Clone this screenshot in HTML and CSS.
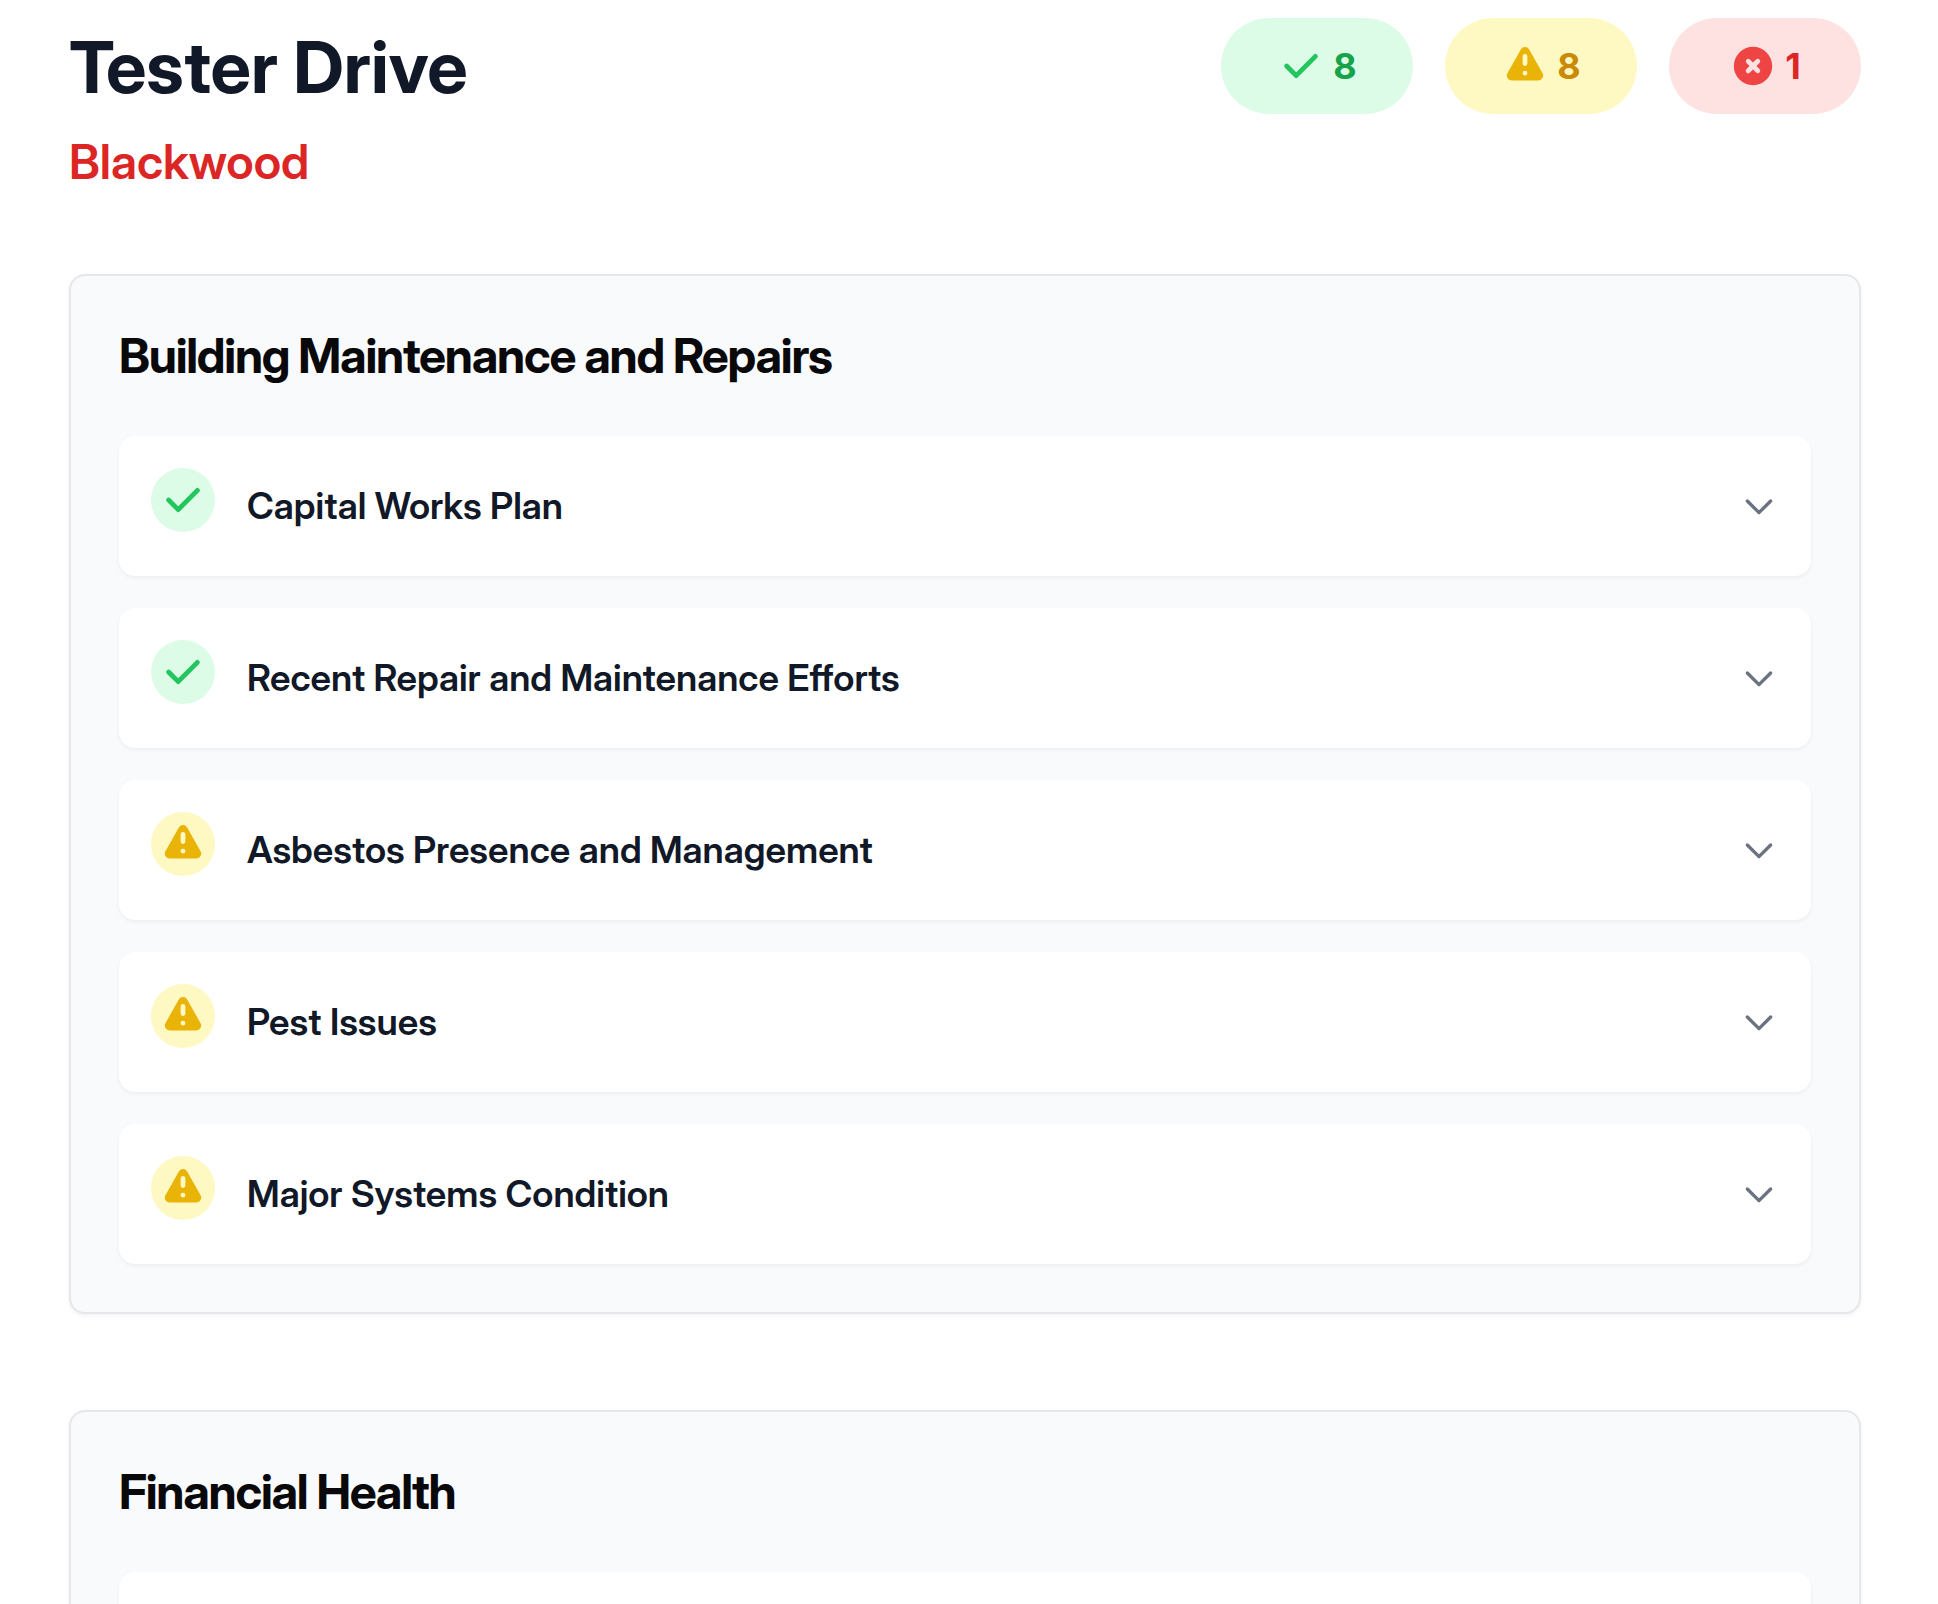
FILE: index.html
```html
<!DOCTYPE html>
<html lang="en">
<head>
<meta charset="utf-8">
<meta name="viewport" content="width=device-width, initial-scale=1">
<title>Tester Drive</title>
<link rel="stylesheet" href="styles.css">
</head>
<body>
<svg class="sprite" aria-hidden="true">
  <symbol id="check" viewBox="0 0 20 20"><path fill-rule="evenodd" d="M16.707 5.293a1 1 0 010 1.414l-8 8a1 1 0 01-1.414 0l-4-4a1 1 0 011.414-1.414L8 12.586l7.293-7.293a1 1 0 011.414 0z"/></symbol>
  <symbol id="warning" viewBox="0 0 20 20"><path fill-rule="evenodd" d="M8.257 3.099c.765-1.36 2.722-1.36 3.486 0l5.58 9.92c.75 1.334-.213 2.98-1.742 2.98H4.42c-1.53 0-2.493-1.646-1.743-2.98l5.58-9.92zM11 13a1 1 0 11-2 0 1 1 0 012 0zm-1-8a1 1 0 00-1 1v3a1 1 0 002 0V6a1 1 0 00-1-1z"/></symbol>
  <symbol id="cross" viewBox="0 0 20 20"><path fill-rule="evenodd" d="M10 18a8 8 0 100-16 8 8 0 000 16zM8.707 7.293a1 1 0 00-1.414 1.414L8.586 10l-1.293 1.293a1 1 0 101.414 1.414L10 11.414l1.293 1.293a1 1 0 001.414-1.414L11.414 10l1.293-1.293a1 1 0 00-1.414-1.414L10 8.586 8.707 7.293z"/></symbol>
  <symbol id="chevron" viewBox="0 0 24 24"><path fill="none" stroke="currentColor" stroke-width="2" stroke-linecap="round" stroke-linejoin="round" d="M19 9l-7 7-7-7"/></symbol>
</svg>
<main class="page">
  <header class="header">
    <div class="header-row">
      <h1 class="title">Tester Drive</h1>
      <div class="badges">
        <span class="badge good"><svg class="icon"><use href="#check"/></svg>8</span>
        <span class="badge warn"><svg class="icon"><use href="#warning"/></svg>8</span>
        <span class="badge bad"><svg class="icon"><use href="#cross"/></svg>1</span>
      </div>
    </div>
    <p class="suburb">Blackwood</p>
  </header>

  <section class="card">
    <h2 class="card-title">Building Maintenance and Repairs</h2>
    <ul class="items">
      <li class="item"><button type="button" class="toggle" aria-expanded="false"><span class="status good"><svg class="icon"><use href="#check"/></svg></span><span class="label">Capital Works Plan</span><svg class="chevron"><use href="#chevron"/></svg></button></li>
      <li class="item"><button type="button" class="toggle" aria-expanded="false"><span class="status good"><svg class="icon"><use href="#check"/></svg></span><span class="label">Recent Repair and Maintenance Efforts</span><svg class="chevron"><use href="#chevron"/></svg></button></li>
      <li class="item"><button type="button" class="toggle" aria-expanded="false"><span class="status warn"><svg class="icon"><use href="#warning"/></svg></span><span class="label">Asbestos Presence and Management</span><svg class="chevron"><use href="#chevron"/></svg></button></li>
      <li class="item"><button type="button" class="toggle" aria-expanded="false"><span class="status warn"><svg class="icon"><use href="#warning"/></svg></span><span class="label">Pest Issues</span><svg class="chevron"><use href="#chevron"/></svg></button></li>
      <li class="item"><button type="button" class="toggle" aria-expanded="false"><span class="status warn"><svg class="icon"><use href="#warning"/></svg></span><span class="label">Major Systems Condition</span><svg class="chevron"><use href="#chevron"/></svg></button></li>
    </ul>
  </section>

  <section class="card">
    <h2 class="card-title">Financial Health</h2>
    <ul class="items">
      <li class="item"></li>
    </ul>
  </section>
</main>
</body>
</html>
```
FILE: styles.css
```css
*, *::before, *::after { box-sizing: border-box; }

body {
  margin: 0;
  height: 100vh;
  overflow: hidden;
  background: #fff;
  color: #111827;
  font-family: "Inter Display", Inter, "Liberation Sans", sans-serif;
}

h1, h2, p, ul { margin: 0; padding: 0; }

.sprite { display: none; }

.page {
  display: flex;
  flex-direction: column;
  gap: 80px;
  padding: 18px 77px 0 69px;
}

.header {
  display: flex;
  flex-direction: column;
  gap: 16px;
}

.header-row {
  display: flex;
  align-items: center;
  justify-content: space-between;
}

.title {
  padding-top: 2px;
  font-size: 72px;
  line-height: 80px;
  font-weight: 700;
}

.suburb {
  font-size: 48px;
  line-height: 64px;
  font-weight: 600;
  color: #dc2626;
}

.badges { display: flex; gap: 32px; }

.badge {
  display: flex;
  align-items: center;
  justify-content: center;
  gap: 8px;
  min-width: 192px;
  height: 96px;
  border-radius: 48px;
  font-family: Inter, "Liberation Sans", sans-serif;
  font-size: 36px;
  line-height: 56px;
  font-weight: 700;
}

.icon {
  flex: none;
  width: 48px;
  height: 48px;
}

.good { background: #dcfce7; color: #16a34a; }
.warn { background: #fef9c3; color: #ca8a04; }
.bad { background: #fee2e2; color: #dc2626; }
.good .icon { fill: #22c55e; }
.warn .icon { fill: #eab308; }
.bad .icon { fill: #ef4444; }

.card {
  padding: 48px;
  border: 2px solid #e5e7eb;
  border-radius: 16px;
  background: #f9fafb;
  box-shadow: 0 2px 4px rgba(0, 0, 0, 0.05);
}

.card + .card { margin-top: 16px; }

.card-title {
  margin-bottom: 48px;
  font-size: 48px;
  line-height: 64px;
  font-weight: 700;
  letter-spacing: -0.025em;
  color: #09090b;
}

.items {
  display: flex;
  flex-direction: column;
  gap: 32px;
  list-style: none;
}

.item {
  min-height: 140px;
  border-radius: 16px;
  background: #fff;
  box-shadow: 0 2px 4px rgba(0, 0, 0, 0.05);
}

.toggle {
  display: flex;
  align-items: center;
  gap: 32px;
  width: 100%;
  padding: 32px;
  border: 0;
  border-radius: 16px;
  background: none;
  color: inherit;
  font: inherit;
  text-align: left;
  cursor: pointer;
}

.status {
  flex: none;
  align-self: flex-start;
  padding: 8px;
  width: 64px;
  height: 64px;
  border-radius: 50%;
}

.status .icon { display: block; }

.label {
  flex: 1;
  padding: 10px 0;
  font-size: 37px;
  line-height: 56px;
  font-weight: 600;
}

.chevron {
  flex: none;
  width: 40px;
  height: 40px;
  color: #6b7280;
}
```
